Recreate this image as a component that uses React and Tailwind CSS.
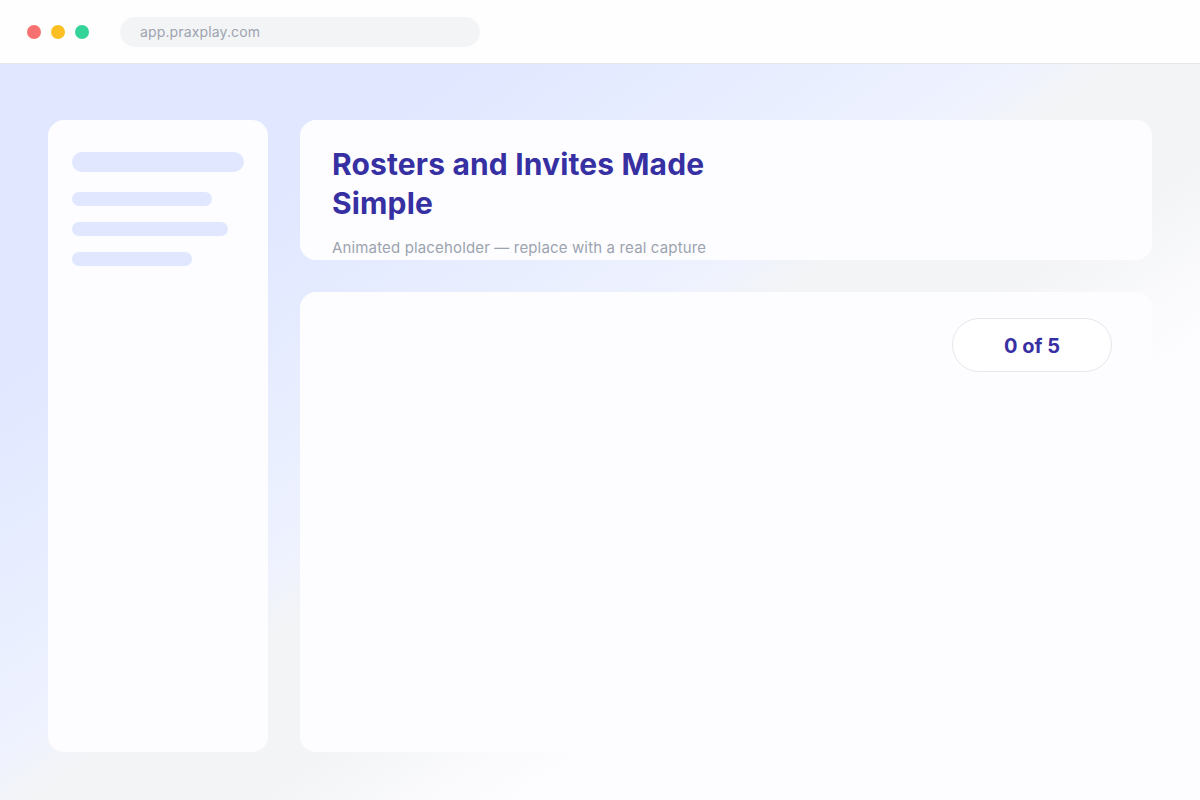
export default function App() {
  return (
    <div className="flex h-[800px] w-[1200px] flex-col overflow-hidden bg-white font-['Inter',sans-serif]">
      <div className="flex h-[64px] shrink-0 items-center border-b border-[#e5e7eb] bg-[#fefeff] pl-[27px]">
        <div className="flex gap-[10px]">
          <span className="h-[14px] w-[14px] rounded-full bg-[#f87171]" />
          <span className="h-[14px] w-[14px] rounded-full bg-[#fbbf24]" />
          <span className="h-[14px] w-[14px] rounded-full bg-[#34d399]" />
        </div>
        <div className="ml-[31px] flex h-[30px] w-[360px] items-center rounded-full bg-[#f3f4f6] px-5 text-sm tracking-[0.01em] text-[#9ca3af]">
          app.praxplay.com
        </div>
      </div>

      <div className="flex flex-1 gap-8 bg-[linear-gradient(146deg,#e0e7ff_0%,#e0e7ff_20%,#eef2ff_44%,#f3f4f6_49%,#f3f4f6_58%,#fdfdff_70%)] px-12 pb-12 pt-14">
        <aside className="flex w-[220px] shrink-0 flex-col rounded-2xl bg-[#fdfdff] px-6 pt-8">
          <div className="h-5 w-[172px] rounded-full bg-[#e0e7ff]" />
          <div className="mt-5 h-[14px] w-[140px] rounded-full bg-[#e0e7ff]" />
          <div className="mt-4 h-[14px] w-[156px] rounded-full bg-[#e0e7ff]" />
          <div className="mt-4 h-[14px] w-[120px] rounded-full bg-[#e0e7ff]" />
        </aside>

        <main className="flex flex-1 flex-col gap-8">
          <section className="h-[140px] shrink-0 overflow-hidden rounded-2xl bg-[#fdfdff] px-8 pt-[25px]">
            <h1 className="max-w-md text-[30px] font-bold leading-[1.3] tracking-[0.005em] text-[#3730a3]">
              Rosters and Invites Made Simple
            </h1>
            <p className="mt-[15px] text-[15px] leading-5 tracking-[0.01em] text-[#9ca3af]">
              Animated placeholder — replace with a real capture
            </p>
          </section>

          <section className="flex flex-1 justify-end rounded-2xl bg-[#fdfdff] pr-10 pt-[26px]">
            <div className="flex h-[54px] w-[160px] items-center justify-center rounded-full border border-[#e5e7eb] bg-white pt-[1px] text-xl font-bold text-[#3730a3]">
              0 of 5
            </div>
          </section>
        </main>
      </div>
    </div>
  );
}
